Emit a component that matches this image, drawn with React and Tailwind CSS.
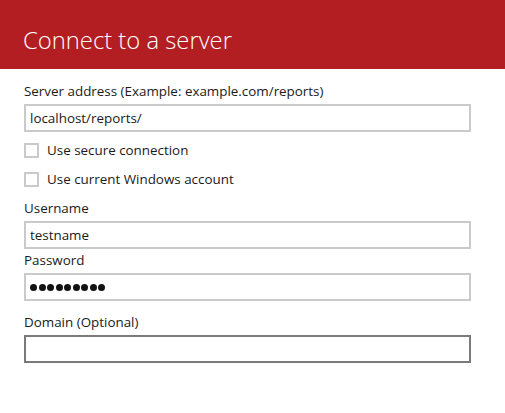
export default function App() {
  const font = { fontFamily: '"Open Sans", "Noto Sans", sans-serif' };
  return (
    <div className="w-[505px] h-[413px] bg-white overflow-hidden" style={font}>
      <div className="h-[69px] bg-[#b31e22] flex items-end pl-[23px] pb-[14px]">
        <h1 className="text-[23.8px] leading-[30px] font-light text-white">Connect to a server</h1>
      </div>
      <div className="pl-[24px] pt-[12px] w-[471px] flex flex-col text-[13.4px] text-[#1a1a1a]">
        <label className="h-[20px] leading-[20px]">Server address (Example: example.com/reports)</label>
        <div className="mt-[3px] h-[28px] border-2 border-[#cacaca] px-[4px] flex items-center leading-[20px]">localhost/reports/</div>
        <div className="mt-[10px] flex items-center gap-[8px] h-[16px]">
          <span className="w-[15px] h-[15px] border-2 border-[#cacaca]"></span>
          <span className="leading-[16px]">Use secure connection</span>
        </div>
        <div className="mt-[13px] flex items-center gap-[8px] h-[16px]">
          <span className="w-[15px] h-[15px] border-2 border-[#cacaca]"></span>
          <span className="leading-[16px]">Use current Windows account</span>
        </div>
        <label className="mt-[11px] h-[20px] leading-[20px]">Username</label>
        <div className="mt-[3px] h-[28px] border-2 border-[#cacaca] px-[4px] flex items-center leading-[20px]">testname</div>
        <label className="mt-[1px] h-[20px] leading-[20px]">Password</label>
        <div className="mt-[3px] h-[28px] border-2 border-[#cacaca] px-[4px] flex items-center gap-[1.5px]">
          {Array.from({ length: 9 }).map((_, i) => (
            <span key={i} className="w-[7px] h-[7px] rounded-full bg-[#111]"></span>
          ))}
        </div>
        <label className="mt-[11px] h-[20px] leading-[20px]">Domain (Optional)</label>
        <div className="mt-[3px] h-[28px] border-2 border-[#7a7a7a]"></div>
      </div>
    </div>
  );
}
